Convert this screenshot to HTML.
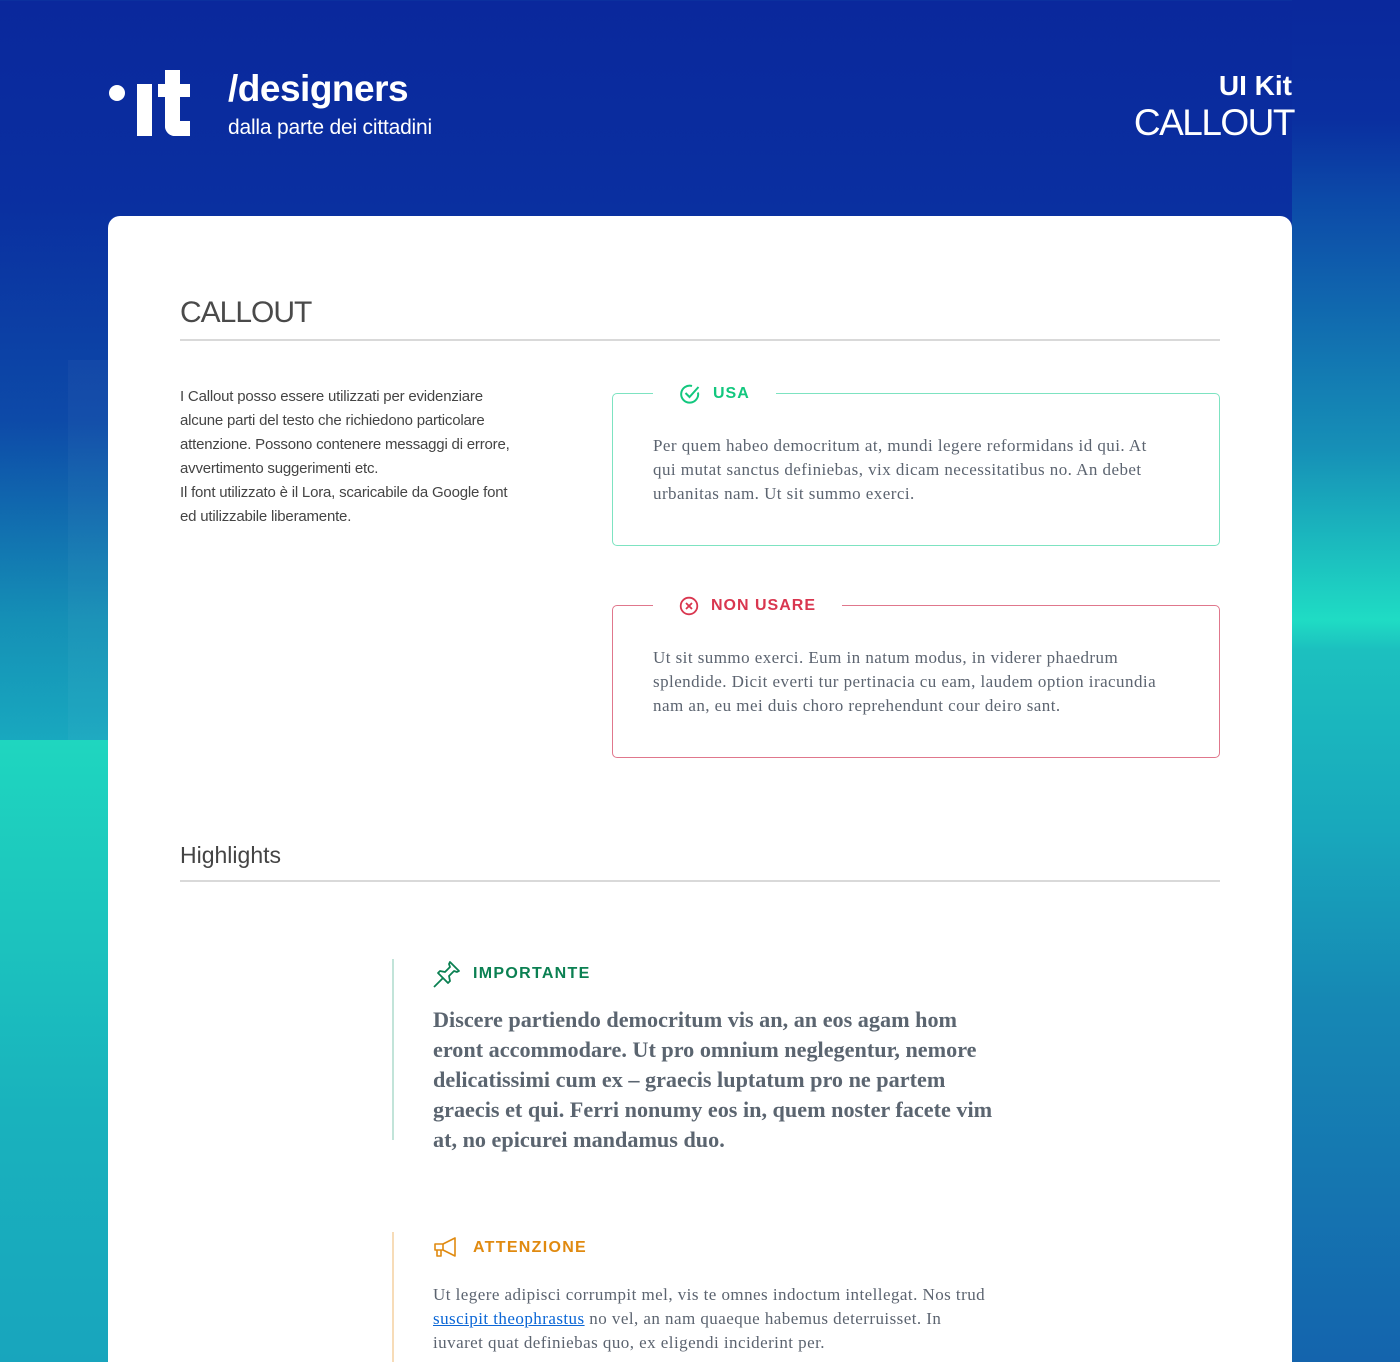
<!DOCTYPE html>
<html><head><meta charset="utf-8"><style>
*{margin:0;padding:0;box-sizing:border-box}
html,body{width:1400px;height:1362px;overflow:hidden}
body{position:relative;background:linear-gradient(180deg,#0a289c 0px,#0a2fa0 200px,#0d4aa8 420px,#1590b6 620px,#18a8bf 740px);font-family:"Liberation Sans",sans-serif}
.lstrip{position:absolute;left:0;top:740px;width:108px;height:622px;background:linear-gradient(180deg,#1fd6bf,#19b2bd 60%,#18a5bd)}
.lpanel{position:absolute;left:68px;top:360px;width:40px;height:1002px;background:rgba(255,255,255,0.03)}
.rstrip{position:absolute;left:1292px;top:0;width:108px;height:1362px;background:linear-gradient(180deg,#0a289c 0px,#0a2fa0 120px,#0c4aa8 200px,#1690b7 450px,#1fdcc4 620px,#1cc0bf 650px,#18a8bc 830px,#1688b4 1000px,#1464ad 1362px)}
.card{position:absolute;left:108px;top:216px;width:1184px;height:1200px;background:#fff;border-radius:12px}
.w{color:#fff;position:absolute}
.serif{font-family:"Liberation Serif",serif}
h2{position:absolute;font-weight:normal;color:#4a4a4a}
.hr{position:absolute;left:180px;width:1040px;height:2px;background:#d9d9d9}
.box{position:absolute;left:612px;width:608px;height:153px;border:1.5px solid;border-radius:5px}
.lab{position:absolute;top:-12px;left:40px;background:#fff;padding:0 26px;display:flex;align-items:center;gap:12px;font-weight:bold;font-size:16px;letter-spacing:1px;height:24px}
.bt{position:absolute;left:40px;top:40px;font-size:17px;letter-spacing:0.45px;line-height:24px;color:#5c6470;font-family:"Liberation Serif",serif;white-space:nowrap}
</style></head><body>
<div class="lpanel"></div>
<div class="lstrip"></div>
<div class="rstrip"></div>

<div class="w" style="left:109px;top:85px;width:16px;height:16px;border-radius:50%;background:#fff"></div>
<div class="w" style="left:137px;top:84px;width:15px;height:52px;background:#fff"></div>
<div class="w" style="left:165px;top:70px;width:15px;height:66px;background:#fff;border-radius:0 0 0 10px"></div>
<div class="w" style="left:165px;top:121px;width:25px;height:15px;background:#fff;border-radius:0 0 0 10px"></div>
<div class="w" style="left:158px;top:84px;width:32px;height:13px;background:#fff"></div>
<div class="w" style="left:228px;top:68px;font-size:37px;font-weight:bold;letter-spacing:-0.5px">/designers</div>
<div class="w" style="left:228px;top:116px;font-size:21px;letter-spacing:-0.2px">dalla parte dei cittadini</div>
<div class="w" style="right:108px;top:70px;font-size:28px;font-weight:bold;text-align:right">UI Kit</div>
<div class="w" style="right:106px;top:102px;font-size:37px;text-align:right;letter-spacing:-1.5px">CALLOUT</div>

<div class="card"></div>
<h2 style="left:180px;top:296px;font-size:30px;letter-spacing:-1px">CALLOUT</h2>
<div class="hr" style="top:339px"></div>
<div style="position:absolute;left:180px;top:385px;font-size:15px;line-height:24px;color:#444;letter-spacing:-0.2px;white-space:nowrap">I Callout posso essere utilizzati per evidenziare<br>alcune parti del testo che richiedono particolare<br>attenzione. Possono contenere messaggi di errore,<br>avvertimento suggerimenti etc.<br>Il font utilizzato è il Lora, scaricabile da Google font<br>ed utilizzabile liberamente.</div>

<div class="box" style="top:393px;border-color:#7de3c1">
 <div class="lab" style="color:#12c77e"><svg width="22" height="22" viewBox="0 0 22 22" fill="none" stroke="#12c77e" stroke-width="2"><path d="M19 9.5A8.5 8.5 0 1 1 13 3"/><path d="M6.5 10l4 4 9-10"/></svg>USA</div>
 <div class="bt">Per quem habeo democritum at, mundi legere reformidans id qui. At<br>qui mutat sanctus definiebas, vix dicam necessitatibus no. An debet<br>urbanitas nam. Ut sit summo exerci.</div>
</div>
<div class="box" style="top:605px;border-color:#e0778c">
 <div class="lab" style="color:#d9364f"><svg width="20" height="20" viewBox="0 0 20 20" fill="none" stroke="#d9364f" stroke-width="1.8"><circle cx="10" cy="10" r="8.3"/><path d="M7 7l6 6M13 7l-6 6"/></svg>NON USARE</div>
 <div class="bt">Ut sit summo exerci. Eum in natum modus, in viderer phaedrum<br>splendide. Dicit everti tur pertinacia cu eam, laudem option iracundia<br>nam an, eu mei duis choro reprehendunt cour deiro sant.</div>
</div>

<h2 style="left:180px;top:842px;font-size:23px;color:#444">Highlights</h2>
<div class="hr" style="top:880px"></div>

<div style="position:absolute;left:392px;top:959px;width:2px;height:181px;background:#c2e4d9"></div>
<div style="position:absolute;left:433px;top:960px;display:flex;align-items:center;gap:12px;color:#0b8052;font-weight:bold;font-size:16px;letter-spacing:1.3px">
<svg width="28" height="28" viewBox="0 0 28 28" fill="none" stroke="#0b8052" stroke-width="1.8" stroke-linejoin="round"><path d="M17 2l9 9-2 1-3-1-5 5 1 5-2 2-10-10 2-2 5 1 5-5-1-3z"/><path d="M10 18l-9 9"/></svg>IMPORTANTE</div>
<div class="serif" style="position:absolute;left:433px;top:1005px;font-size:22.2px;line-height:30px;font-weight:bold;color:#5b6570;white-space:nowrap">Discere partiendo democritum vis an, an eos agam hom<br>eront accommodare. Ut pro omnium neglegentur, nemore<br>delicatissimi cum ex – graecis luptatum pro ne partem<br>graecis et qui. Ferri nonumy eos in, quem noster facete vim<br>at, no epicurei mandamus duo.</div>

<div style="position:absolute;left:392px;top:1232px;width:2px;height:130px;background:#f7dcb8"></div>
<div style="position:absolute;left:433px;top:1236px;display:flex;align-items:center;gap:12px;color:#e08a10;font-weight:bold;font-size:16px;letter-spacing:1.3px">
<svg width="28" height="24" viewBox="0 0 28 24" fill="none" stroke="#e08a10" stroke-width="1.6" stroke-linejoin="round"><path d="M2 8h8l12-6v18l-12-6H2z"/><path d="M10 8v6M4 14v6h4v-6"/></svg>ATTENZIONE</div>
<div class="serif" style="position:absolute;left:433px;top:1283px;font-size:17px;letter-spacing:0.45px;line-height:24px;color:#5c6470;white-space:nowrap">Ut legere adipisci corrumpit mel, vis te omnes indoctum intellegat. Nos trud<br><span style="color:#0a66d6;text-decoration:underline">suscipit theophrastus</span> no vel, an nam quaeque habemus deterruisset. In<br>iuvaret quat definiebas quo, ex eligendi inciderint per.</div>
</body></html>
